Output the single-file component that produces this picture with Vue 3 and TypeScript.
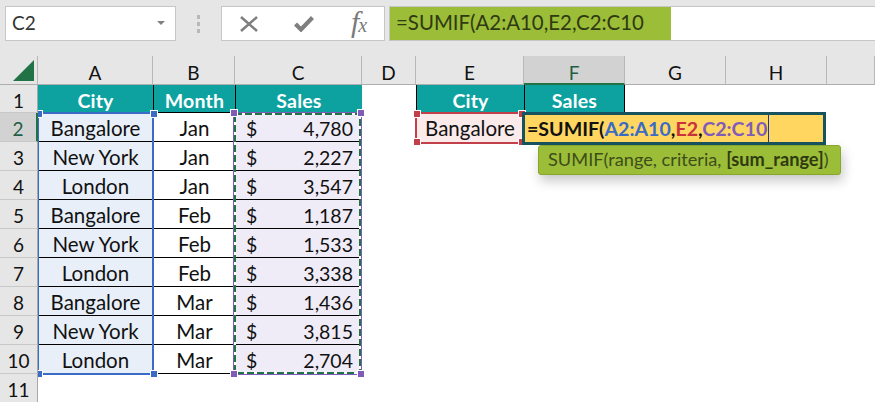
<script setup lang="ts">
const cols = ['A', 'B', 'C', 'D', 'E', 'F', 'G', 'H', '']
const rowsNums = [1, 2, 3, 4, 5, 6, 7, 8, 9, 10, 11]
const data: [string, string, string][] = [
  ['Bangalore', 'Jan', '4,780'],
  ['New York', 'Jan', '2,227'],
  ['London', 'Jan', '3,547'],
  ['Bangalore', 'Feb', '1,187'],
  ['New York', 'Feb', '1,533'],
  ['London', 'Feb', '3,338'],
  ['Bangalore', 'Mar', '1,436'],
  ['New York', 'Mar', '3,815'],
  ['London', 'Mar', '2,704'],
]
</script>

<template>
  <div class="app">
    <div class="bar">
      <div class="namebox"><span>C2</span><i class="caret"></i></div>
      <div class="dots"><b></b><b></b><b></b></div>
      <div class="btns">
        <svg class="ix" width="18" height="16" viewBox="0 0 18 16"><path d="M1 1 L17 15 M17 1 L1 15" stroke="#7f7f7f" stroke-width="2.6" fill="none" /></svg>
        <svg class="ic" width="20" height="16" viewBox="0 0 20 16"><path d="M1.5 8 L7 13.5 L18.5 1.5" stroke="#7f7f7f" stroke-width="4.2" fill="none" /></svg>
        <span class="fx">f<small>x</small></span>
      </div>
      <div class="formula"><span class="ftext">=SUMIF(A2:A10,E2,C2:C10</span></div>
    </div>

    <div class="sheet">
      <div class="corner"><i></i></div>
      <div v-for="c in cols" :key="c" class="colh" :class="{ on: c === 'F' }">{{ c }}</div>

      <div class="rowhs">
        <div v-for="r in rowsNums" :key="r" class="rowh" :class="{ first: r === 1, on: r === 2 }">{{ r }}</div>
      </div>

      <div class="body">
        <div class="tbl">
          <div class="hc">City</div><div class="hc">Month</div><div class="hc">Sales</div>
          <template v-for="(d, i) in data" :key="i">
            <div class="c city">{{ d[0] }}</div>
            <div class="c">{{ d[1] }}</div>
            <div class="c sales"><span>$</span><span>{{ d[2] }}</span></div>
          </template>
        </div>
        <div class="tbl2">
          <div class="hc">City</div><div class="hc">Sales</div>
          <div class="c2 crit">Bangalore</div><div class="c2"></div>
        </div>

        <div class="rng blue"><i class="h tl"></i><i class="h tr"></i><i class="h bl"></i><i class="h br"></i></div>
        <div class="rng purple">
          <svg class="dash" width="127" height="261" viewBox="0 0 127 261">
            <rect x="1" y="1" width="125" height="259" fill="none" stroke="#fff" stroke-width="2" />
            <rect x="1" y="1" width="125" height="259" fill="none" stroke="#217346" stroke-width="2" stroke-dasharray="7 3" />
          </svg>
          <i class="h tl"></i><i class="h tr"></i><i class="h bl"></i><i class="h br"></i>
        </div>
        <div class="rng red"><i class="h tl"></i><i class="h tr"></i><i class="h bl"></i><i class="h br"></i></div>

        <div class="edit">=SUMIF(<span class="fb">A2:A10</span>,<span class="fr">E2</span>,<span class="fp">C2:C10</span><i class="cursor"></i></div>
        <div class="tip">SUMIF(range, criteria, <b>[sum_range]</b>)</div>
      </div>
    </div>
  </div>
</template>

<style scoped>
.app {
  width: 875px;
  height: 402px;
  overflow: hidden;
  background: #fff;
  font-family: Lato, "Open Sans", sans-serif;
  color: #111;
}
.bar {
  height: 56px;
  background: #e6e6e6;
  box-sizing: border-box;
  padding: 6px 0 0 5px;
  display: flex;
  align-items: flex-start;
}
.namebox {
  width: 171px;
  height: 35px;
  box-sizing: border-box;
  background: #fff;
  border: 1px solid #c6c6c6;
  display: flex;
  align-items: center;
  justify-content: space-between;
  padding: 0 10px 2px 6px;
  font-size: 19px;
  color: #333;
}
.caret {
  width: 0;
  height: 0;
  border-left: 4px solid transparent;
  border-right: 4px solid transparent;
  border-top: 4px solid #808080;
}
.dots {
  width: 45px;
  height: 35px;
  display: flex;
  flex-direction: column;
  align-items: center;
  justify-content: center;
  gap: 3px;
}
.dots b {
  width: 3px;
  height: 4px;
  background: #b9b9b9;
}
.btns {
  width: 164px;
  height: 35px;
  box-sizing: border-box;
  background: #fff;
  border: 1px solid #c6c6c6;
  display: flex;
  align-items: center;
  padding-left: 18px;
}
.ic { margin-left: 36px; }
.fx {
  font-family: "Liberation Serif", serif;
  font-style: italic;
  font-size: 30px;
  line-height: 30px;
  color: #7a7a7a;
  margin-left: 37px;
}
.fx small { font-size: 20px; margin-left: -1px; }
.formula {
  margin-left: 4px;
  flex: 1;
  height: 35px;
  box-sizing: border-box;
  background: #fff;
  border: 1px solid #c6c6c6;
  border-right: 0;
  display: flex;
  align-self: flex-start;
}
.ftext {
  width: 281px;
  background: #9bbd37;
  box-sizing: border-box;
  padding-left: 6px;
  font-size: 20.4px;
  line-height: 31px;
  color: #2f3a12;
  white-space: nowrap;
}
.sheet {
  display: grid;
  grid-template-columns: 38px 115px 82px 127px 54px 108px 101px 101px 101px 48px;
  grid-template-rows: 29px 317px;
}
.corner {
  background: #e6e6e6;
  border-right: 1px solid #b8b8b8;
  border-bottom: 1px solid #aeaeae;
  box-sizing: border-box;
  position: relative;
}
.corner i {
  position: absolute;
  left: 13px;
  bottom: 3px;
  width: 0;
  height: 0;
  border-left: 21px solid transparent;
  border-bottom: 21px solid #217346;
}
.colh {
  background: #e6e6e6;
  border-right: 1px solid #b8b8b8;
  border-bottom: 1px solid #aeaeae;
  box-sizing: border-box;
  text-align: center;
  font-size: 19px;
  line-height: 33px;
  color: #111;
}
.colh:last-of-type { border-right: 0; }
.colh.on {
  background: #d2d2d2;
  color: #1f5f45;
  border-bottom: 2px solid #217346;
}
.rowhs { background: #e6e6e6; }
.rowh {
  height: 29px;
  box-sizing: border-box;
  background: #e6e6e6;
  border-right: 1px solid #a8a8a8;
  border-bottom: 1px solid #c8c8c8;
  text-align: center;
  font-size: 19px;
  line-height: 32px;
}
.rowh.first { height: 28px; }
.rowh.on {
  background: #d2d2d2;
  color: #1f5f45;
  border-right: 2px solid #217346;
}
.body {
  grid-column: 2 / -1;
  position: relative;
  overflow: hidden;
  background: #fff;
  display: flex;
  align-items: flex-start;
  gap: 54px;
}
.tbl {
  display: grid;
  grid-template-columns: 115px 82px 127px;
  grid-template-rows: 28px repeat(9, 29px);
}
.tbl2 {
  display: grid;
  grid-template-columns: 108px 101px;
  grid-template-rows: 28px 29px;
}
.hc {
  background: #0da2a0;
  color: #fff;
  font-weight: 700;
  font-size: 19.5px;
  letter-spacing: 0.2px;
  line-height: 31px;
  text-align: center;
  box-sizing: border-box;
  border-left: 1px solid #000;
  border-bottom: 1px solid #000;
}
.tbl .hc:first-child { border-left: 0; }
.tbl2 .hc:nth-child(2) { border-right: 1px solid #000; }
.c {
  box-sizing: border-box;
  border-bottom: 1px solid #000;
  border-left: 1px solid #000;
  text-align: center;
  font-size: 20.5px;
  line-height: 31px;
  color: #111;
}
.city {
  background: #e8eff9;
  border-left: 0;
}
.sales {
  background: #f0ecf7;
  display: flex;
  justify-content: space-between;
  padding: 0 9px 0 10px;
  font-size: 19.5px;
}
.c2 {
  box-sizing: border-box;
  font-size: 20.5px;
  line-height: 31px;
  text-align: center;
}
.crit { background: #faeaea; }
.rng {
  position: absolute;
  box-sizing: border-box;
  pointer-events: none;
}
.h {
  position: absolute;
  width: 6px;
  height: 6px;
  background: var(--col);
  outline: 1px solid #fff;
}
.tl { left: -3px; top: -3px; }
.tr { right: -3px; top: -3px; }
.bl { left: -3px; bottom: -3px; }
.br { right: -3px; bottom: -3px; }
.blue {
  --col: #3a6cc6;
  left: 0;
  top: 27px;
  width: 116px;
  height: 263px;
  border: 2px solid #3a6cc6;
  border-left-width: 1px;
}
.blue .tr, .blue .br { right: -5px; }
.blue .bl, .blue .br { bottom: -4px; }
.purple {
  --col: #7f5cb8;
  left: 195px;
  top: 27px;
  width: 129px;
  height: 263px;
  border: 1px solid #7f5cb8;
}
.dash {
  position: absolute;
  left: 0;
  top: 0;
}
.red {
  --col: #c2404a;
  left: 377px;
  top: 27px;
  width: 109px;
  height: 32px;
  border: 2px solid #c2404a;
}
.edit {
  position: absolute;
  left: 484px;
  top: 27px;
  width: 304px;
  height: 33px;
  box-sizing: border-box;
  background: #ffd660;
  border: 3px solid #17535e;
  font-weight: 700;
  font-size: 19.6px;
  line-height: 28px;
  padding-left: 2px;
  color: #111;
  white-space: nowrap;
}
.fb { color: #3a6cc6; }
.fr { color: #c8323c; }
.fp { color: #7f5cb8; }
.cursor {
  display: inline-block;
  width: 1px;
  height: 27px;
  background: #1a3aa0;
  vertical-align: top;
  margin-left: 1px;
}
.tip {
  position: absolute;
  left: 500px;
  top: 60px;
  width: 303px;
  height: 30px;
  box-sizing: border-box;
  background: #9bbd37;
  border: 1px solid #86a62c;
  border-radius: 3px;
  box-shadow: 2px 6px 12px rgba(0, 0, 0, 0.22);
  font-size: 18.2px;
  line-height: 27px;
  padding-left: 9px;
  color: #3e4d1a;
  white-space: nowrap;
}
.tip b { color: #2f3a12; }
</style>
